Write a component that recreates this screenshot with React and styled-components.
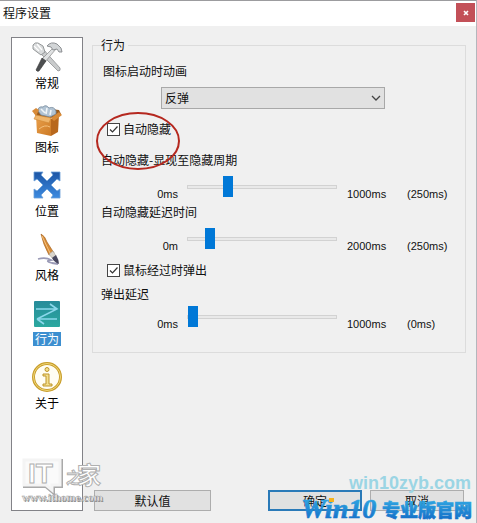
import React, { useState } from 'react';
import styled, { createGlobalStyle } from 'styled-components';

const GlobalStyle = createGlobalStyle`
  * {
    box-sizing: border-box;
  }
  body {
    margin: 0;
    background: #f0f0f0;
    color: #111;
    font-family: 'Noto Sans CJK SC', sans-serif;
    font-size: 12px;
    line-height: 16px;
  }
  button, select, input {
    font: inherit;
    color: inherit;
  }
`

const Window = styled.div`
  position: relative;
  display: flex;
  flex-direction: column;
  min-height: 100vh;
  overflow: hidden;
  background: #f0f0f0;
  border-top: 1px solid #9c9c9f;
  border-right: 1px solid #b4b6bc;
`

const TitleBar = styled.header`
  display: flex;
  align-items: center;
  justify-content: space-between;
  height: 25px;
  padding: 0 1px 2px 3px;
  background: #fff;
`

const Title = styled.h1`
  margin: 0;
  font-size: 12px;
  font-weight: normal;
`

const CloseButton = styled.button`
  display: flex;
  align-items: center;
  justify-content: center;
  width: 19px;
  height: 19px;
  padding: 0;
  border: 0;
  background: #c35058;
`

const Content = styled.div`
  flex: 1;
  display: flex;
  gap: 9px;
  padding: 11px 10px 12px 11px;
`

const Sidebar = styled.nav`
  width: 72px;
  padding-top: 3px;
  background: #fff;
  border: 1px solid #828287;
`

const NavItem = styled.button`
  display: flex;
  flex-direction: column;
  align-items: center;
  gap: 2px;
  width: 100%;
  height: 64px;
  padding: 0;
  border: 0;
  background: none;
  color: #000;

  svg {
    display: block;
    width: 32px;
    height: 32px;
  }
`

const NavLabel = styled.span`
  padding: 0 2px;
  line-height: 14px;
  margin-top: 1px;
  color: ${props => props.$active ? '#fff' : '#000'};
  background: ${props => props.$active ? '#3d8fd0' : 'none'};
`

const Main = styled.main`
  flex: 1;
  min-width: 0;
  display: flex;
  flex-direction: column;
  justify-content: space-between;
`

const Group = styled.fieldset`
  min-width: 0;
  margin: 0;
  padding: 10px 8px 20px 8px;
  border: 1px solid #dcdcdc;
`

const Legend = styled.legend`
  padding: 0 3px 0 0;
`

const FieldLabel = styled.label`
  display: block;
  padding-left: ${props => props.$indent || 0}px;
  margin-bottom: ${props => props.$gap || 8}px;
`

const SelectBox = styled.div`
  position: relative;
  margin: 0 72px 12px 60px;

  svg {
    position: absolute;
    right: 4px;
    top: 8px;
    pointer-events: none;
  }
`

const Select = styled.select`
  display: block;
  appearance: none;
  width: 100%;
  height: 22px;
  padding: 0 20px 0 3px;
  border: 1px solid #a8a8a8;
  border-radius: 0;
  background: #e1e1e1;
`

const CheckRow = styled.div`
  display: flex;
  align-items: center;
  gap: 3px;
  padding-left: 6px;
  margin-bottom: ${props => props.$gap}px;
`

const CheckWrap = styled.span`
  display: grid;

  > * {
    grid-area: 1 / 1;
  }
  svg {
    pointer-events: none;
  }
  input:not(:checked) + svg {
    visibility: hidden;
  }
`

const Checkbox = styled.input`
  appearance: none;
  width: 13px;
  height: 13px;
  margin: 0;
  border: 1px solid #444;
  background: #fff;
`

const SliderRow = styled.div`
  display: grid;
  grid-template-columns: 86px minmax(60px, 1fr) 60px 60px;
  align-items: start;
  margin-bottom: ${props => props.$gap}px;
`

const Value = styled.span`
  padding-top: 10px;
  padding-left: ${props => props.$left || 0}px;
  padding-right: ${props => props.$right || 0}px;
  text-align: ${props => props.$right ? 'right' : 'left'};
  font-family: 'Liberation Sans', Arial, sans-serif;
  font-size: 11px;
  white-space: nowrap;
`

const Range = styled.input`
  appearance: none;
  display: block;
  width: 100%;
  height: 21px;
  margin: 0;
  background: none;

  &::-webkit-slider-runnable-track {
    height: 4px;
    border: 1px solid #d2d2d2;
    background: #e9e9e9;
  }
  &::-webkit-slider-thumb {
    appearance: none;
    width: 10px;
    height: 21px;
    margin-top: -10px;
    background: #0078d7;
  }
`

const Buttons = styled.div`
  display: flex;
  gap: 8px;
  padding: 0 2px;
`

const Button = styled.button`
  width: ${props => props.$wide ? 117 : 94}px;
  height: 21px;
  padding: 0;
  margin-right: ${props => props.$wide ? 'auto' : 0};
  border: ${props => props.$primary ? '2px solid #2a7ab8' : '1px solid #adadad'};
  background: #e1e1e1;
  line-height: 16px;
`

const RedCircle = styled.svg`
  position: absolute;
  left: 95px;
  top: 110px;
  pointer-events: none;
`

const EdgeShade = styled.div`
  position: absolute;
  right: -1px;
  top: 359px;
  width: 1px;
  height: 88px;
  background: #4c5064;
`

const StampLeft = styled.svg`
  position: absolute;
  left: 18px;
  bottom: 14px;
  pointer-events: none;
`

const StampRight = styled.svg`
  position: absolute;
  right: 0;
  bottom: 0;
  pointer-events: none;
`

const ToolsIcon = () => (
  <svg viewBox="0 0 32 32">
    <path d="M8 11 L12 8 L29 27 Q30 30 27 30 Z" fill="#c9cbcc" stroke="#8f9294" strokeWidth=".8" />
    <path d="M2 4 Q4 1 7 2 L12 5 L14 11 L10 14 L6 11 L2 8 Z" fill="#d9dbdc" stroke="#8b8e90" strokeWidth=".9" />
    <path d="M3 5 L8 10 M6 3 L11 9" stroke="#fff" strokeWidth="1.2" />
    <path d="M23 6 L25 8 L14 21 L11 18 Z" fill="#dfe1e2" stroke="#888" strokeWidth=".7" />
    <path d="M11 17 L15 20 L8 30 Q6 31 5 29 Z" fill="#4d4f51" stroke="#333" strokeWidth=".6" />
    <path d="M16 5 Q20 0 26 3 L30 7 L31 11 L28 11 L26 8 L22 9 L20 6 Z" fill="#d2d5d7" stroke="#83878a" strokeWidth=".9" />
  </svg>
)

const BoxIcon = () => (
  <svg viewBox="0 0 32 32">
    <defs>
      <linearGradient id="box" x2="1" y2="1">
        <stop offset="0" stopColor="#eaa04b" />
        <stop offset="1" stopColor="#cc7a26" />
      </linearGradient>
    </defs>
    <path d="M3 7 L11 3 L28 5 L30 9 L20 13 L5 11 Z" fill="#9c5c1c" />
    <path d="M7 6 Q7 1 12 2 Q15 -1 18 3 Q23 1 25 6 L25 9 L19 12 L10 10 Z" fill="#b2c4d4" stroke="#73889b" strokeWidth=".8" />
    <path d="M10 4 L14 8 M16 3 L15 9 M20 5 L19 10" stroke="#f0f5f8" strokeWidth="1.6" />
    <path d="M5 11 L20 14 L20 31 L6 28 Z" fill="url(#box)" />
    <path d="M20 14 L28 10 L27 27 L20 31 Z" fill="#b8681d" />
    <path d="M5 10 L20 13 L18 18 L3 14 Z" fill="#efb56b" stroke="#cf8834" strokeWidth=".6" />
    <path d="M20 13 L28 7 L31 10 L23 16 Z" fill="#d98a36" />
    <path d="M1 6 L5 3 L8 5 L5 11 Z" fill="#d88b39" />
    <path d="M8 24 Q14 19 19 22" stroke="#f5c17d" fill="none" />
  </svg>
)

const ArrowsIcon = () => (
  <svg viewBox="0 0 32 32">
    <defs>
      <linearGradient id="arrows" x2="0" y2="1">
        <stop offset="0" stopColor="#1c55a5" />
        <stop offset="1" stopColor="#3d8be0" />
      </linearGradient>
    </defs>
    <path
      d="M3 3 H12 L10 6 L16 12 L22 6 L20 3 H29 V12 L26 10 L20 16 L26 22 L29 20 V29 H20 L22 26 L16 20 L10 26 L12 29 H3 V20 L6 22 L12 16 L6 10 L3 12 Z"
      fill="url(#arrows)"
      stroke="#6b9fd8"
      strokeWidth=".8"
    />
  </svg>
)

const BrushIcon = () => (
  <svg viewBox="0 0 32 32">
    <path d="M7 26 Q15 24 20 27 Q13 28 21 30 L27 31" fill="none" stroke="#9a9ab6" strokeWidth="1.8" />
    <path d="M10 1 Q14 3 16 9 L23 20 L18 22 Q12 11 10 1 Z" fill="#d78b37" stroke="#a15e1c" strokeWidth=".6" />
    <path d="M11 3 L19 20" stroke="#f4c27e" strokeWidth="1" />
    <path d="M18 21 L22 18 L25 23 L21 25 Z" fill="#d9d5cd" stroke="#9b968d" strokeWidth=".5" />
    <path d="M21 25 L25 22 Q28 27 28 31 Q23 29 21 25 Z" fill="#47475f" />
  </svg>
)

const BehaviorIcon = () => (
  <svg viewBox="0 0 32 32">
    <defs>
      <linearGradient id="behavior" x2="0" y2="1">
        <stop offset="0" stopColor="#278b9a" />
        <stop offset="1" stopColor="#2ba89f" />
      </linearGradient>
    </defs>
    <rect x="3" y="4" width="26" height="26" rx="1" fill="url(#behavior)" />
    <path d="M5 12 H26 M19 7 L26 12 L6 22 M6 22 H26 M6 22 L13 27" fill="none" stroke="#8bd7eb" strokeWidth="1.6" />
  </svg>
)

const AboutIcon = () => (
  <svg viewBox="0 0 32 32">
    <circle cx="16" cy="16" r="13.5" fill="#fffdf2" stroke="#c89d2a" strokeWidth="3" />
    <circle cx="16" cy="16" r="13.5" fill="none" stroke="#f0d778" strokeWidth="1" />
    <circle cx="16" cy="8.5" r="2" fill="#f4df8c" stroke="#bd952b" />
    <path d="M12 13 H18 V23 H21 V25 H12 V23 H15 V15 H12 Z" fill="#f4df8c" stroke="#bd952b" />
  </svg>
)

const navItems = [
  { label: '常规', Icon: ToolsIcon },
  { label: '图标', Icon: BoxIcon },
  { label: '位置', Icon: ArrowsIcon },
  { label: '风格', Icon: BrushIcon },
  { label: '行为', Icon: BehaviorIcon },
  { label: '关于', Icon: AboutIcon },
]

const Check = ({ id, label, gap }) => (
  <CheckRow $gap={gap}>
    <CheckWrap>
      <Checkbox type="checkbox" id={id} defaultChecked />
      <svg width="13" height="13" viewBox="0 0 13 13">
        <path d="M3 6.5 L5.5 9 L10.5 3.5" fill="none" stroke="#333" strokeWidth="1.2" />
      </svg>
    </CheckWrap>
    <label htmlFor={id}>{label}</label>
  </CheckRow>
)

const Slider = ({ id, max, start, minLabel, gap }) => {
  const [value, setValue] = useState(start);
  return (
    <SliderRow $gap={gap}>
      <Value $right={9}>{minLabel}</Value>
      <Range id={id} type="range" min="0" max={max} value={value} onChange={e => setValue(Number(e.target.value))} />
      <Value $left={10}>{max}ms</Value>
      <Value $left={10}>({value}ms)</Value>
    </SliderRow>
  );
}

const IthomeStamp = () => (
  <StampLeft width="94" height="54" viewBox="0 0 94 54">
    <path d="M7 6 H43 V31 H35 V37 L28 31 H7 Z" fill="none" stroke="#a9a9a9" strokeWidth="4" />
    <path d="M6 5 H42 V30 H34 V35 L28 30 H6 Z" fill="#fafafa" stroke="#f4f4f4" strokeWidth="3" />
    <g fill="#fff" stroke="#b0b0b0" strokeWidth="1">
      <text x="10" y="28" fontFamily="Liberation Sans, sans-serif" fontWeight="bold" fontSize="28">IT</text>
      <text x="48" y="28" fontFamily="Noto Sans CJK SC, sans-serif" fontWeight="bold" fontSize="15">之</text>
      <text x="59" y="29" fontFamily="Noto Sans CJK SC, sans-serif" fontWeight="bold" fontSize="24">家</text>
    </g>
    <g fontFamily="Liberation Serif, serif" fontWeight="bold" fontSize="11">
      <text x="5" y="47" fill="#8c8c8c">www.ithome.com</text>
      <text x="4" y="46" fill="#f4f4f4" stroke="#999" strokeWidth=".4">www.ithome.com</text>
    </g>
  </StampLeft>
)

const Win10Stamp = () => (
  <StampRight width="177" height="52" viewBox="0 0 177 52">
    <defs>
      <linearGradient id="stamp" x2="0" y2="1">
        <stop offset="0" stopColor="#35b2e8" />
        <stop offset="1" stopColor="#1167c4" />
      </linearGradient>
    </defs>
    <text x="50" y="18" fontFamily="Liberation Sans, sans-serif" fontWeight="bold" fontSize="18" fill="#9bd5e4">win10zyb.com</text>
    <g fill="url(#stamp)" stroke="url(#stamp)" strokeWidth=".6">
      <text x="2" y="47" fontFamily="Liberation Serif, serif" fontWeight="bold" fontStyle="italic" fontSize="28">Win10</text>
      <text x="83" y="46" fontFamily="Noto Sans CJK SC, sans-serif" fontWeight="900" fontSize="18">专业版官网</text>
    </g>
    <rect x="30" y="27" width="5" height="4" fill="#f5b31c" />
  </StampRight>
)

export default function App() {
  const [active, setActive] = useState('行为');

  return (
    <Window>
      <GlobalStyle />
      <TitleBar>
        <Title>程序设置</Title>
        <CloseButton aria-label="关闭">
          <svg width="6" height="6" viewBox="0 0 6 6">
            <path d="M1 1 L5 5 M5 1 L1 5" stroke="#fff" strokeWidth="1.6" />
          </svg>
        </CloseButton>
      </TitleBar>
      <Content>
        <Sidebar>
          {navItems.map(({ label, Icon }) => (
            <NavItem key={label} onClick={() => setActive(label)}>
              <Icon />
              <NavLabel $active={label === active}>{label}</NavLabel>
            </NavItem>
          ))}
        </Sidebar>
        <Main>
          <Group>
            <Legend>行为</Legend>
            <FieldLabel htmlFor="animation" $indent={2}>图标启动时动画</FieldLabel>
            <SelectBox>
              <Select id="animation" defaultValue="反弹">
                <option>反弹</option>
              </Select>
              <svg width="10" height="6" viewBox="0 0 10 6">
                <path d="M1 1 L5 5 L9 1" fill="none" stroke="#444" strokeWidth="1.3" />
              </svg>
            </SelectBox>
            <Check id="autohide" label="自动隐藏" gap={15} />
            <FieldLabel htmlFor="period">自动隐藏-显现至隐藏周期</FieldLabel>
            <Slider id="period" max={1000} start={250} minLabel="0ms" gap={2} />
            <FieldLabel htmlFor="delay">自动隐藏延迟时间</FieldLabel>
            <Slider id="delay" max={2000} start={250} minLabel="0m" gap={8} />
            <Check id="hover" label="鼠标经过时弹出" gap={8} />
            <FieldLabel htmlFor="popup" $gap={4}>弹出延迟</FieldLabel>
            <Slider id="popup" max={1000} start={0} minLabel="0ms" gap={0} />
          </Group>
          <Buttons>
            <Button $wide>默认值</Button>
            <Button $primary>确定</Button>
            <Button>取消</Button>
          </Buttons>
        </Main>
      </Content>
      <RedCircle width="86" height="60" viewBox="0 0 86 60">
        <ellipse cx="43" cy="30" rx="41" ry="28" fill="none" stroke="#b5281f" strokeWidth="2" />
      </RedCircle>
      <EdgeShade />
      <IthomeStamp />
      <Win10Stamp />
    </Window>
  );
}
